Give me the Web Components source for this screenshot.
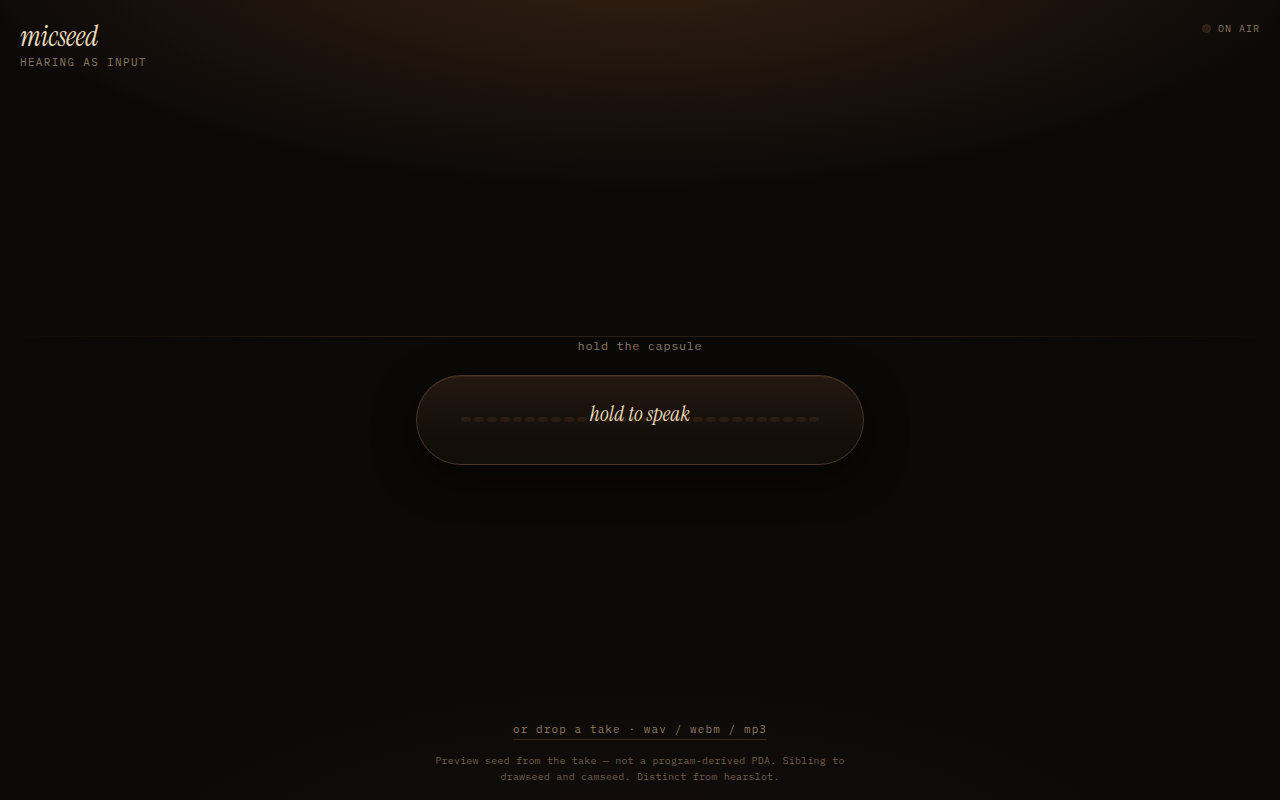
<!DOCTYPE html>
<html lang="en">
<head>
<meta charset="utf-8">
<meta name="viewport" content="width=device-width, initial-scale=1">
<title>micseed</title>
<style>
  html, body {
    margin: 0;
    background: #0a0907;
  }
</style>
</head>
<body>
<mic-app>
  <mic-brand slot="brand" name="micseed" tagline="hearing as input"></mic-brand>
  <air-lamp slot="lamp">on air</air-lamp>
  <span slot="hint">hold the capsule</span>
  <mic-capsule bars="28">hold to speak</mic-capsule>
  <take-drop slot="drop" accept=".wav,.webm,.mp3">or drop a take · wav / webm / mp3</take-drop>
  <span slot="note">Preview seed from the take — not a program-derived PDA. Sibling to drawseed and camseed. Distinct from hearslot.</span>
</mic-app>

<script>
class MicApp extends HTMLElement {
  constructor() {
    super();
    this.attachShadow({ mode: 'open' });
    this.shadowRoot.innerHTML = `
      <style>
        :host {
          --cream: #e8d9b8;
          --dim: #8a7860;
          --faint: #6e5f4a;
          --edge: #4a3422;
          --serif: "Instrument Serif", "Liberation Serif", serif;
          --mono: "IBM Plex Mono", "Liberation Mono", monospace;
          position: relative;
          display: flex;
          flex-direction: column;
          box-sizing: border-box;
          min-height: 100vh;
          padding: 20px 20px 15px;
          font-family: var(--mono);
          color: var(--dim);
          background:
            radial-gradient(ellipse 90% 55% at 50% -10%, #332111 0%, #2c1c10 18%, #1a110c 43%, transparent 63%),
            radial-gradient(ellipse 90% 54% at 50% 110%, #140e0b 0%, transparent 55%),
            #0a0907;
        }
        .horizon {
          position: absolute;
          top: 42%;
          left: 0;
          right: 0;
          height: 1px;
          background: linear-gradient(90deg, transparent, #2a1e12 30%, #2a1e12 70%, transparent);
        }
        header {
          display: flex;
          justify-content: space-between;
          align-items: flex-start;
        }
        main {
          flex: 1;
          display: flex;
          flex-direction: column;
          align-items: center;
          justify-content: center;
          gap: 20px;
          padding-top: 10px;
        }
        .hint {
          margin: 0;
          font-size: 12px;
          line-height: 18px;
          letter-spacing: 0.05em;
        }
        footer {
          display: flex;
          flex-direction: column;
          align-items: center;
          gap: 13px;
        }
        .note {
          max-width: 420px;
          margin: 0;
          font-size: 10px;
          line-height: 16px;
          letter-spacing: 0.02em;
          text-align: center;
          color: var(--faint);
        }
      </style>
      <div class="horizon"></div>
      <header>
        <slot name="brand"></slot>
        <slot name="lamp"></slot>
      </header>
      <main>
        <p class="hint"><slot name="hint"></slot></p>
        <slot></slot>
      </main>
      <footer>
        <slot name="drop"></slot>
        <p class="note"><slot name="note"></slot></p>
      </footer>
    `;
  }
}

class MicBrand extends HTMLElement {
  constructor() {
    super();
    this.attachShadow({ mode: 'open' });
  }

  connectedCallback() {
    this.render();
  }

  render() {
    this.shadowRoot.innerHTML = `
      <style>
        :host {
          display: block;
        }
        h1 {
          margin: 0;
          font: italic 400 28px/34px var(--serif);
          letter-spacing: -0.01em;
          color: var(--cream);
        }
        p {
          margin: 0;
          font-size: 11px;
          line-height: 16px;
          letter-spacing: 0.12em;
          text-transform: uppercase;
        }
      </style>
      <h1>${this.getAttribute('name') || ''}</h1>
      <p>${this.getAttribute('tagline') || ''}</p>
    `;
  }
}

class AirLamp extends HTMLElement {
  constructor() {
    super();
    this.attachShadow({ mode: 'open' });
    this.shadowRoot.innerHTML = `
      <style>
        :host {
          display: flex;
          align-items: center;
          gap: 7px;
          font-size: 10px;
          line-height: 17px;
          letter-spacing: 0.1em;
          text-transform: uppercase;
        }
        .lamp {
          width: 9px;
          height: 9px;
          box-sizing: border-box;
          border: 1px solid #3a2a1e;
          border-radius: 50%;
          background: #2e1e15;
        }
      </style>
      <span class="lamp"></span>
      <span><slot></slot></span>
    `;
  }
}

class MicCapsule extends HTMLElement {
  constructor() {
    super();
    this.attachShadow({ mode: 'open' });
  }

  connectedCallback() {
    this.render();
  }

  render() {
    const count = Number(this.getAttribute('bars')) || 28;

    this.shadowRoot.innerHTML = `
      <style>
        :host {
          display: block;
          width: 100%;
          max-width: 448px;
        }
        button {
          display: grid;
          align-items: center;
          box-sizing: border-box;
          width: 100%;
          height: 90px;
          padding: 0 44px;
          border: 1px solid var(--edge);
          border-radius: 999px;
          background: linear-gradient(180deg, #241811 0%, #130e0a 70%, #120e0a 100%);
          box-shadow:
            inset 0 1px 0 rgba(255, 220, 170, 0.08),
            0 12px 40px rgba(0, 0, 0, 0.55);
          color: var(--cream);
          cursor: pointer;
        }
        .meter,
        .label {
          grid-area: 1 / 1;
        }
        .meter {
          display: flex;
          gap: 3px;
        }
        .meter i {
          flex: 1;
          height: 5px;
          border-radius: 3px;
          background: #291d13;
        }
        .label {
          z-index: 1;
          padding-bottom: 12px;
          font: italic 400 21px/24px var(--serif);
          letter-spacing: 0.01em;
          text-align: center;
        }
      </style>
      <button type="button">
        <span class="meter">${'<i></i>'.repeat(count)}</span>
        <span class="label"><slot></slot></span>
      </button>
    `;
  }
}

class TakeDrop extends HTMLElement {
  constructor() {
    super();
    this.attachShadow({ mode: 'open' });
    this.shadowRoot.innerHTML = `
      <style>
        :host {
          display: block;
        }
        button {
          display: block;
          padding: 0 0 2px;
          border: 0;
          border-bottom: 1px solid #3a281a;
          background: none;
          color: #8f7c62;
          font: 11px/16px var(--mono);
          letter-spacing: 0.1em;
          cursor: pointer;
        }
      </style>
      <button type="button"><slot></slot></button>
      <input type="file" aria-label="Audio take" hidden>
    `;
  }

  connectedCallback() {
    const input = this.shadowRoot.querySelector('input');
    input.accept = this.getAttribute('accept') || 'audio/*';
    this.shadowRoot.querySelector('button').onclick = () => input.click();
  }
}

customElements.define('mic-app', MicApp);
customElements.define('mic-brand', MicBrand);
customElements.define('air-lamp', AirLamp);
customElements.define('mic-capsule', MicCapsule);
customElements.define('take-drop', TakeDrop);
</script>
</body>
</html>
